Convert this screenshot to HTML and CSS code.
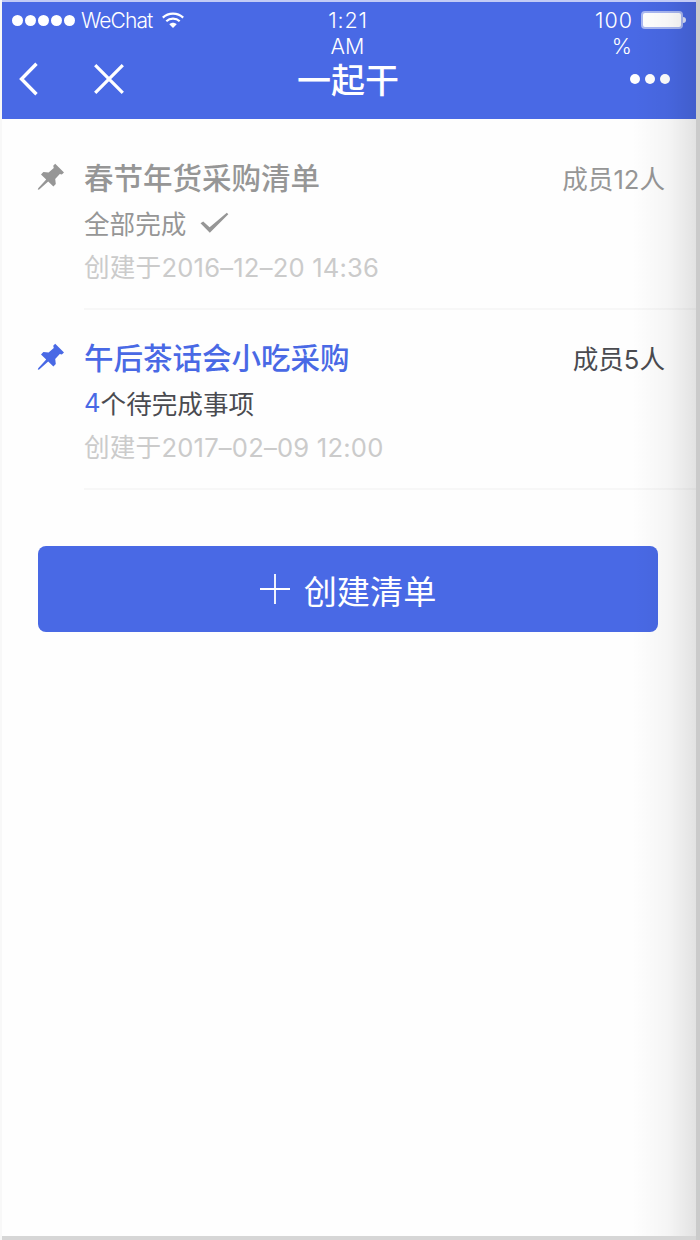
FILE: index.html
```html
<!DOCTYPE html>
<html lang="zh-CN">
<head>
    <meta charset="UTF-8">
    <meta name="viewport" content="width=device-width, initial-scale=1.0">
    <title>一起干</title>
    <link rel="stylesheet" href="styles.css">
</head>
<body>
    <div class="phone">
        <header class="header">
            <div class="status-bar">
                <div class="carrier">
                    <div class="signal"><i></i><i></i><i></i><i></i><i></i></div>
                    <span class="carrier-name">WeChat</span>
                    <svg class="wifi" width="22" height="17" viewBox="0 0 22 17" fill="none" stroke="#fff" stroke-width="2.2">
                        <path d="M0.8 5.6C6.5 0.2 15.5 0.2 21.2 5.6"/>
                        <path d="M4.3 9.2C8 5.7 14 5.7 17.7 9.2"/>
                        <path d="M7.3 12.3C9.5 10.3 12.5 10.3 14.7 12.3L11 16Z" fill="#fff" stroke="none"/>
                    </svg>
                </div>
                <div class="time"><span class="clock">1:21</span><br>AM</div>
                <div class="power">
                    <div class="percent"><span class="digits">100</span><br>%</div>
                    <div class="battery"></div>
                </div>
            </div>
            <nav class="nav">
                <div class="nav-left">
                    <svg width="19" height="34" viewBox="0 0 19 34" fill="none" stroke="#fff" stroke-width="3.4">
                        <path d="M17.5 1.8L2.5 17L17.5 32.2"/>
                    </svg>
                    <svg width="30" height="30" viewBox="0 0 30 30" fill="none" stroke="#fff" stroke-width="3.2">
                        <path d="M1.2 1.2L28.8 28.8M28.8 1.2L1.2 28.8"/>
                    </svg>
                </div>
                <h1 class="nav-title">一起干</h1>
                <div class="more"><i></i><i></i><i></i></div>
            </nav>
        </header>

        <main class="content">
            <div class="item done">
                <svg class="pin" width="28" height="28" viewBox="0 0 28 28" fill="currentColor">
                    <path d="M18.2 0.8L27 9.5L24.8 11.4L22.8 11L18.2 16L18.8 21L16.4 23.6L11.2 18.4L2.2 26.6L0.8 26.8L1.2 25.2L9.2 16.4L4 11.4L6.4 9L11.6 9.6L16.8 5L16.2 2.8Z"/>
                </svg>
                <div class="item-body">
                    <div class="item-head">
                        <h2 class="item-title">春节年货采购清单</h2>
                        <span class="members">成员12人</span>
                    </div>
                    <p class="state">全部完成
                        <svg class="check" width="29" height="22" viewBox="0 0 29 22" fill="currentColor">
                            <path d="M0.5 11.2L3.2 9.4L9.6 15.3L26.8 0.8L28.3 2.3L9.8 20.8Z"/>
                        </svg>
                    </p>
                    <p class="created">创建于2016–12–20 14:36</p>
                </div>
            </div>
            <div class="item">
                <svg class="pin" width="28" height="28" viewBox="0 0 28 28" fill="currentColor">
                    <path d="M18.2 0.8L27 9.5L24.8 11.4L22.8 11L18.2 16L18.8 21L16.4 23.6L11.2 18.4L2.2 26.6L0.8 26.8L1.2 25.2L9.2 16.4L4 11.4L6.4 9L11.6 9.6L16.8 5L16.2 2.8Z"/>
                </svg>
                <div class="item-body">
                    <div class="item-head">
                        <h2 class="item-title">午后茶话会小吃采购</h2>
                        <span class="members">成员5人</span>
                    </div>
                    <p class="state"><span class="count">4</span>个待完成事项</p>
                    <p class="created">创建于2017–02–09 12:00</p>
                </div>
            </div>
            <button class="create">
                <svg width="30" height="30" viewBox="0 0 30 30" fill="none" stroke="#fff" stroke-width="1.8">
                    <path d="M15 0V30M0 15H30"/>
                </svg>
                <span>创建清单</span>
            </button>
        </main>
    </div>
</body>
</html>
```

FILE: styles.css
```css
* {
    box-sizing: border-box;
}
body {
    margin: 0;
    height: 1240px;
    padding: 2px 4px 4px 2px;
    background: linear-gradient(to right, #f8f8f8 0, #f8f8f8 2px, #cbcbcb 694px);
    font-family: Inter, "Noto Sans CJK SC", sans-serif;
    color: #4a4b50;
}
h1, h2, p {
    margin: 0;
}
.phone {
    position: relative;
    height: 1234px;
    background: #fefefe;
    box-shadow: 0 4px 0 #d6d6d6, 0 -2px 0 #c2cbf6;
}
/* soft shade along the right edge */
.phone::after {
    content: "";
    position: absolute;
    top: 0;
    right: 0;
    bottom: 0;
    width: 64px;
    background: linear-gradient(to right, rgba(0,0,0,0), rgba(0,0,0,0.035) 55%, rgba(0,0,0,0.11));
}
.header {
    height: 117px;
    background: #4969e5;
    color: #fff;
}

/* status bar */
.status-bar {
    display: grid;
    grid-template-columns: 1fr auto 1fr;
    height: 56px;
    padding: 5px 10px 0;
    font-size: 21.5px;
    font-weight: 300;
    line-height: 26px;
}
.carrier {
    display: flex;
    align-items: center;
    height: 26px;
}
.signal {
    display: flex;
    gap: 2px;
}
.signal i {
    width: 11px;
    height: 11px;
    border-radius: 50%;
    background: #fff;
}
.carrier-name {
    margin-left: 6px;
    padding-top: 1px;
    font-size: 21px;
    letter-spacing: -0.9px;
}
.wifi {
    margin-left: 10px;
}
.time {
    padding-right: 3px;
    text-align: center;
}
.clock {
    margin-right: -1px;
    letter-spacing: 0.8px;
}
.power {
    display: flex;
    justify-content: flex-end;
}
.percent {
    text-align: right;
}
.digits {
    margin-right: -1px;
    letter-spacing: 1px;
}
.battery {
    position: relative;
    width: 42px;
    height: 18px;
    margin: 4px 3px 0 9px;
    border: 2px solid #a9b8f3;
    border-radius: 4px;
    background: #fff;
}
.battery::after {
    content: "";
    position: absolute;
    top: 4px;
    right: -5px;
    width: 3px;
    height: 6px;
    border-radius: 0 3px 3px 0;
    background: #dfe5fb;
}

/* nav */
.nav {
    display: grid;
    grid-template-columns: 1fr auto 1fr;
    align-items: center;
    height: 42px;
    padding: 0 26px 0 17px;
}
.nav-left {
    display: flex;
    align-items: center;
    gap: 56px;
}
.nav-title {
    padding: 4px 0 0 7px;
    font-size: 34px;
    font-weight: 500;
    line-height: 36px;
}
.more {
    display: flex;
    justify-content: flex-end;
    gap: 5px;
}
.more i {
    width: 10px;
    height: 10px;
    border-radius: 50%;
    background: #fff;
}

/* list */
.content {
    padding: 11px 0 0 35px;
}
.item {
    display: flex;
    height: 180px;
    color: #4969e5;
}
.pin {
    flex: none;
    margin: 33px 19px 0 0;
}
.item-body {
    flex: 1;
    padding: 27px 31px 0 0;
    border-bottom: 2px solid #f7f7f7;
}
.item-head {
    display: flex;
    justify-content: space-between;
    height: 43px;
    line-height: 42px;
}
.item-title {
    font-size: 29.5px;
    font-weight: 500;
}
.members {
    padding-top: 2px;
    font-size: 25.6px;
    color: #4a4b50;
}
.state {
    display: flex;
    align-items: center;
    height: 44px;
    font-size: 25.6px;
    color: #4a4b50;
}
.count {
    color: #4969e5;
}
.check {
    margin: 2px 0 0 14px;
}
.created {
    padding-top: 2px;
    font-size: 25.6px;
    line-height: 44px;
    letter-spacing: 0.2px;
    color: #cbcbcb;
}
.done, .done .members, .done .state {
    color: #969696;
}

.create {
    display: flex;
    align-items: center;
    justify-content: center;
    gap: 14px;
    width: 620px;
    height: 86px;
    margin: 56px 0 0 1px;
    padding: 0;
    border: 0;
    border-radius: 8px;
    background: #4969e5;
    color: #fff;
    font-family: inherit;
    font-size: 33.2px;
}
```
